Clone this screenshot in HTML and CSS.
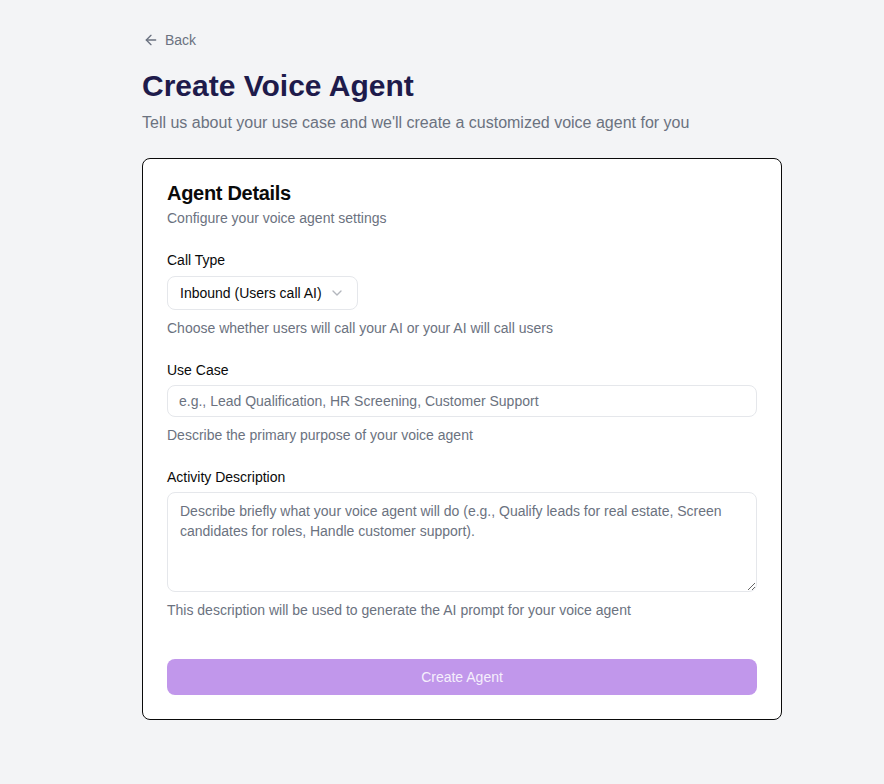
FILE: index.html
```html
<!DOCTYPE html>
<html lang="en">
<head>
<meta charset="utf-8">
<title>Create Voice Agent</title>
<link rel="stylesheet" href="styles.css">
</head>
<body>
<main class="page">
  <a class="back" href="#">
    <svg class="back-icon" width="16" height="16" viewBox="0 0 24 24" fill="none" stroke="currentColor" stroke-width="2" stroke-linecap="round" stroke-linejoin="round"><path d="m12 19-7-7 7-7"/><path d="M19 12H5"/></svg>
    <span>Back</span>
  </a>
  <h1 class="title">Create Voice Agent</h1>
  <p class="subtitle">Tell us about your use case and we'll create a customized voice agent for you</p>

  <section class="card">
    <h2 class="card-title">Agent Details</h2>
    <p class="card-desc">Configure your voice agent settings</p>

    <div class="field field-first">
      <label class="label">Call Type</label>
      <div class="select">
        <span>Inbound (Users call AI)</span>
        <svg class="chev" width="16" height="16" viewBox="0 0 24 24" fill="none" stroke="currentColor" stroke-width="2" stroke-linecap="round" stroke-linejoin="round"><path d="m6 9 6 6 6-6"/></svg>
      </div>
      <p class="help help-select">Choose whether users will call your AI or your AI will call users</p>
    </div>

    <div class="field">
      <label class="label">Use Case</label>
      <input class="input" type="text" placeholder="e.g., Lead Qualification, HR Screening, Customer Support">
      <p class="help">Describe the primary purpose of your voice agent</p>
    </div>

    <div class="field">
      <label class="label">Activity Description</label>
      <textarea class="textarea" placeholder="Describe briefly what your voice agent will do (e.g., Qualify leads for real estate, Screen candidates for roles, Handle customer support)."></textarea>
      <p class="help">This description will be used to generate the AI prompt for your voice agent</p>
    </div>

    <button class="submit" type="button">Create Agent</button>
  </section>
</main>
</body>
</html>
```

FILE: styles.css
```css
* { box-sizing: border-box; }
html, body { margin: 0; padding: 0; }
body {
  background: #f3f4f6;
  font-family: "Liberation Sans", Arial, sans-serif;
  color: #0a0a0a;
  min-height: 784px;
}
.page {
  width: 640px;
  margin-left: 142px;
  padding-top: 30px;
  padding-bottom: 40px;
}
.back {
  display: inline-flex;
  align-items: center;
  gap: 6px;
  color: #6b7280;
  text-decoration: none;
  font-size: 14px;
  line-height: 20px;
  height: 20px;
}
.back-icon { display: block; margin-left: 1px; }
.title {
  margin: 16px 0 0;
  font-size: 30px;
  line-height: 36px;
  font-weight: 700;
  color: #1e1b4b;
}
.subtitle {
  margin: 5px 0 0;
  font-size: 16px;
  line-height: 28px;
  color: #6b7280;
}
.card {
  margin-top: 21px;
  background: #fff;
  border: 1px solid #0a0a0a;
  border-radius: 8px;
  padding: 24px;
}
.card-title {
  margin: 0;
  font-size: 20px;
  line-height: 20px;
  font-weight: 700;
  letter-spacing: -0.3px;
  color: #0a0a0a;
}
.card-desc {
  margin: 5px 0 0;
  font-size: 14px;
  line-height: 20px;
  color: #6b7280;
}
.field { margin-top: 22px; }
.field-first { margin-top: 22px; }
.label {
  display: block;
  font-size: 14px;
  line-height: 20px;
  color: #0a0a0a;
}
.select {
  margin-top: 6px;
  display: inline-flex;
  align-items: center;
  gap: 7px;
  height: 34px;
  padding: 0 12px 0 12px;
  border: 1px solid #e5e7eb;
  border-radius: 8px;
  background: #fff;
  font-size: 14px;
  color: #0a0a0a;
}
.chev { color: #b3b6bd; display: block; }
.input {
  display: block;
  margin-top: 5px;
  width: 100%;
  height: 32px;
  padding: 0 11px;
  border: 1px solid #e5e7eb;
  border-radius: 8px;
  background: #fff;
  font-family: inherit;
  font-size: 14px;
  color: #0a0a0a;
  outline: none;
}
.input::placeholder, .textarea::placeholder { color: #6b7280; opacity: 1; }
.textarea {
  display: block;
  margin-top: 5px;
  width: 100%;
  height: 100px;
  padding: 8px 12px;
  border: 1px solid #e5e7eb;
  border-radius: 8px;
  background: #fff;
  font-family: inherit;
  font-size: 14px;
  line-height: 20px;
  color: #0a0a0a;
  outline: none;
  resize: vertical;
}
.help {
  margin: 8px 0 0;
  font-size: 14px;
  line-height: 20px;
  color: #6b7280;
}
.help-select { margin-top: 8px; }
.submit {
  display: block;
  margin-top: 39px;
  width: 100%;
  height: 36px;
  border: 0;
  border-radius: 8px;
  background: #c197eb;
  color: #f5effc;
  font-family: inherit;
  font-size: 14px;
}
```
